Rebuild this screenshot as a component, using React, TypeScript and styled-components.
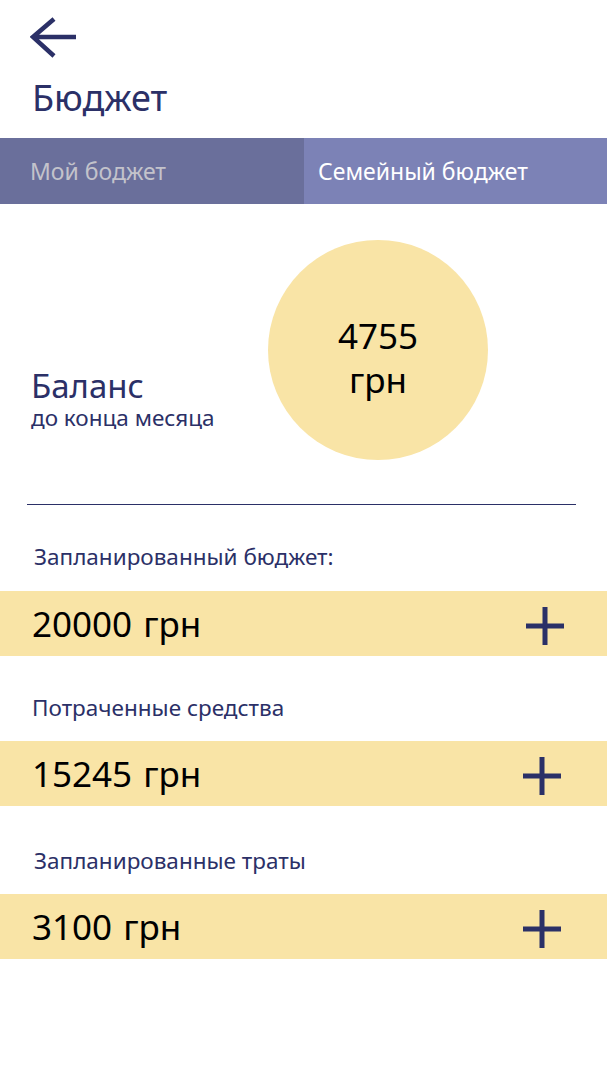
import React from "react";
import styled, { createGlobalStyle } from "styled-components";

const Global = createGlobalStyle`
  html, body { margin: 0; padding: 0; background: #fff; }
  body { font-family: "Noto Sans", "Open Sans", sans-serif; }
`;

const Page = styled.div`
  width: 607px;
  min-height: 1080px;
  background: #fff;
  display: flex;
  flex-direction: column;
`;

const Header = styled.header`
  padding: 17px 0 0 30px;
  height: 138px;
  box-sizing: border-box;
  display: flex;
  flex-direction: column;
`;

const BackButton = styled.button`
  border: 0;
  background: none;
  padding: 0;
  width: 48px;
  height: 42px;
  cursor: pointer;
  display: block;
`;

const Title = styled.h1`
  margin: 17px 0 0 2px;
  font-size: 36px;
  font-weight: 400;
  line-height: 44px;
  color: #2b3067;
`;

const Tabs = styled.nav`
  display: flex;
  height: 66px;
`;

const Tab = styled.div<{ $active?: boolean }>`
  flex: ${(p) => (p.$active ? "0 0 303px" : "0 0 304px")};
  background: ${(p) => (p.$active ? "#7c82b6" : "#6a6f9b")};
  color: ${(p) => (p.$active ? "#ffffff" : "#c3c3cb")};
  font-size: 23px;
  display: flex;
  align-items: center;
  padding-left: ${(p) => (p.$active ? "14px" : "30px")};
  box-sizing: border-box;
`;

const BalanceSection = styled.section`
  display: flex;
  align-items: flex-start;
  padding: 36px 0 0 31px;
  height: 300px;
  box-sizing: border-box;
`;

const BalanceText = styled.div`
  flex: 0 0 237px;
  display: flex;
  flex-direction: column;
  color: #2b3067;
  margin-top: 129px;
`;

const BalanceTitle = styled.div`
  font-size: 33px;
  line-height: 34px;
`;

const BalanceSub = styled.div`
  font-size: 22.5px;
  line-height: 26px;
  margin-top: 2px;
`;

const Circle = styled.div`
  width: 220px;
  height: 220px;
  border-radius: 50%;
  background: #f9e4a6;
  display: flex;
  flex-direction: column;
  align-items: center;
  justify-content: center;
  padding-top: 16px;
  box-sizing: border-box;
  color: #000;
  font-size: 35px;
  line-height: 44px;
`;

const Divider = styled.hr`
  border: 0;
  border-top: 1px solid #2b3067;
  margin: 0 31px 0 27px;
  height: 0;
`;

const Block = styled.section`
  display: flex;
  flex-direction: column;
`;

const Label = styled.div<{ $pad: number; $top: number; $h: number }>`
  color: #2b3067;
  font-size: 22.5px;
  line-height: 30px;
  padding: ${(p) => p.$top}px 0 0 ${(p) => p.$pad}px;
  height: ${(p) => p.$h}px;
  box-sizing: border-box;
`;

const Band = styled.div<{ $plusRight: number }>`
  height: 65px;
  background: #f9e4a6;
  display: flex;
  align-items: center;
  justify-content: space-between;
  padding: 4px ${(p) => p.$plusRight}px 0 32px;
  box-sizing: border-box;
`;

const Amount = styled.div`
  font-size: 35px;
  color: #000;
  line-height: 40px;
  margin-top: -4px;
  word-spacing: 2px;
`;

const AddButton = styled.button`
  border: 0;
  background: none;
  padding: 0;
  width: 40px;
  height: 40px;
  cursor: pointer;
  display: block;
`;

const Plus = () => (
  <svg width="40" height="40" viewBox="0 0 40 40">
    <path d="M20 1 V39 M1 20 H39" stroke="#2b3067" strokeWidth="5" fill="none" />
  </svg>
);

const Arrow = () => (
  <svg width="48" height="42" viewBox="0 0 48 42">
    <path
      d="M2 20 H46 M24 2 L3 20 L24 39"
      stroke="#2b3067"
      strokeWidth="4.5"
      fill="none"
      strokeLinejoin="miter"
    />
  </svg>
);

const items = [
  { label: "Запланированный бюджет:", amount: "20000", pad: 34, top: 37, h: 86, right: 42 },
  { label: "Потраченные средства", amount: "15245", pad: 32, top: 37, h: 85, right: 45 },
  { label: "Запланированные траты", amount: "3100", pad: 34, top: 40, h: 88, right: 45 },
];

export default function App() {
  return (
    <Page>
      <Global />
      <Header>
        <BackButton aria-label="Назад">
          <Arrow />
        </BackButton>
        <Title>Бюджет</Title>
      </Header>
      <Tabs>
        <Tab>Мой боджет</Tab>
        <Tab $active>Семейный бюджет</Tab>
      </Tabs>
      <BalanceSection>
        <BalanceText>
          <BalanceTitle>Баланс</BalanceTitle>
          <BalanceSub>до конца месяца</BalanceSub>
        </BalanceText>
        <Circle>
          <span>4755</span>
          <span>грн</span>
        </Circle>
      </BalanceSection>
      <Divider />
      {items.map((it) => (
        <Block key={it.label}>
          <Label $pad={it.pad} $top={it.top} $h={it.h}>{it.label}</Label>
          <Band $plusRight={it.right}>
            <Amount>{it.amount} грн</Amount>
            <AddButton aria-label="Добавить">
              <Plus />
            </AddButton>
          </Band>
        </Block>
      ))}
    </Page>
  );
}
